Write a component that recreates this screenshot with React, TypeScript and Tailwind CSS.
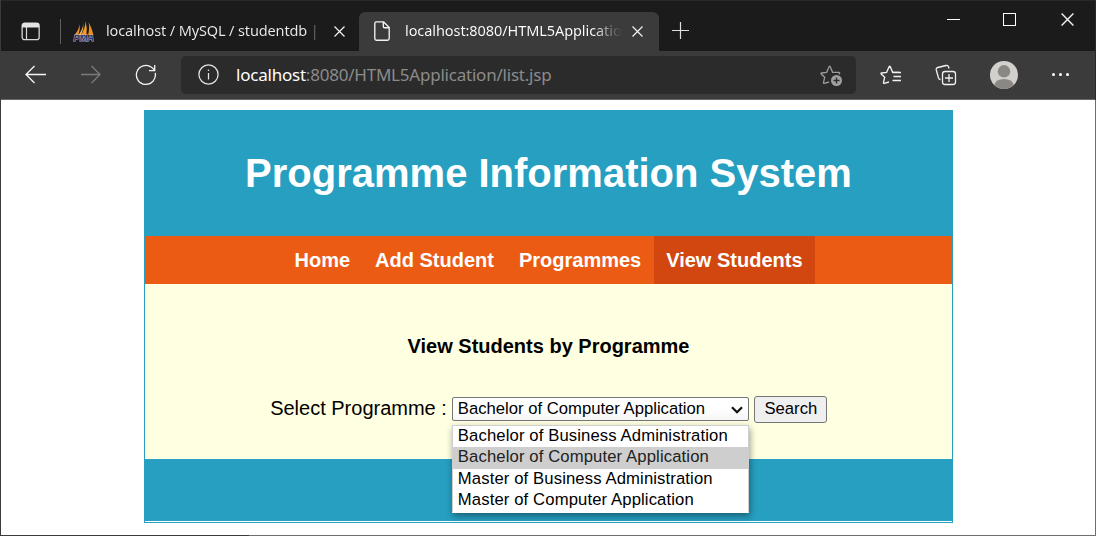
import React from 'react';

const navItems = ['Home', 'Add Student', 'Programmes', 'View Students'];
const options = [
  'Bachelor of Business Administration',
  'Bachelor of Computer Application',
  'Master of Business Administration',
  'Master of Computer Application',
];

function CloseIcon({ className }: { className: string }) {
  return (
    <svg className={className} viewBox="0 0 11 11" fill="none" stroke="#f2f2f2" strokeWidth="1.2">
      <path d="M.5 .5 10.5 10.5M10.5 .5 .5 10.5" />
    </svg>
  );
}

function TabStrip() {
  return (
    <div className="flex h-[51px] border-t border-[#292929] bg-[#1b1b1b]">
      <svg className="mt-[21px] ml-[20px] h-[19px] w-[19px] shrink-0" viewBox="0 0 19 19" fill="none">
        <rect x="1.15" y="1.15" width="17" height="16.5" rx="2.5" stroke="#d8d8d8" strokeWidth="1.3" />
        <path d="M1 3.5Q1 1 3.5 1H15.5Q18 1 18 3.5V5.5H1Z" fill="#e4e4e4" />
        <path d="M5.5 5V18" stroke="#d8d8d8" strokeWidth="1.2" />
      </svg>
      <div className="mt-[18px] ml-5 h-[25px] w-px shrink-0 bg-[#606060]" />
      <div className="flex h-[50px] w-[298px] shrink-0 rounded-br-[6px] pl-[12px]">
        <svg className="mt-[19px] h-[22px] w-[22px] shrink-0" viewBox="0 0 22 22">
          <path d="M6.5 4Q7.5 9 5.5 15H1.5Q6 10 6.5 4Z" fill="#e9952f" />
          <path d="M12.5 1Q14.5 8 13.5 15H8Q12.5 8 12.5 1Z" fill="#f59a22" />
          <path d="M15.5 2Q19 8 20.5 15H15Q17 8 15.5 2Z" fill="#f28c1e" />
          <path d="M10.5 3Q11 9 8 15H5.5Q10 9 10.5 3Z" fill="#f7b866" />
          <text x="0.5" y="20.8" textLength="20.5" lengthAdjust="spacingAndGlyphs" fill="#31335f" stroke="#b4b4cf" strokeWidth=".9" paintOrder="stroke" className="font-['Liberation_Sans',sans-serif] text-[8.5px] font-bold italic">PMA</text>
        </svg>
        <div className="mt-[17px] ml-[11px] h-6 w-[218px] bg-linear-to-r from-[#ececec] from-92% to-transparent to-98% bg-clip-text text-[14.5px] leading-6 tracking-[-0.13px] whitespace-nowrap text-transparent">
          localhost / MySQL / studentdb | p
        </div>
        <CloseIcon className="mt-[25px] ml-[10px] h-[11px] w-[11px] shrink-0" />
      </div>
      <div className="mt-[11px] flex h-[39px] w-[300px] shrink-0 rounded-t-[6px] bg-[#3b3b3b] pl-[15px]">
        <svg className="mt-[9px] h-[20px] w-[16px] shrink-0" viewBox="0 0 16 20" fill="none" stroke="#f3f3f3" strokeWidth="1.35" strokeLinejoin="round">
          <path d="M2.5 .8H9.5L15.2 6.5V17.5Q15.2 19.2 13.5 19.2H2.5Q.8 19.2 .8 17.5V2.5Q.8 .8 2.5 .8ZM9.3 1V5.5Q9.3 6.7 10.5 6.7H15" />
        </svg>
        <div className="mt-[6px] ml-[15px] h-6 w-[219px] bg-linear-to-r from-white from-86% to-[#3b3b3b] to-99% bg-clip-text text-[14.5px] leading-6 tracking-[-0.08px] whitespace-nowrap text-transparent">
          localhost:8080/HTML5Application
        </div>
        <CloseIcon className="mt-[14px] ml-[8px] h-[11px] w-[11px] shrink-0" />
      </div>
      <svg className="mt-[20px] ml-[12px] h-[19px] w-[19px] shrink-0" viewBox="0 0 19 19" stroke="#dddddd" strokeWidth="1.2">
        <path d="M1 9.5H18M9.5 1V18" />
      </svg>
      <div className="ml-auto flex pr-[21px]">
        <div className="mt-[18px] h-px w-[13px] bg-white" />
        <div className="mt-[12px] ml-[43px] h-[13px] w-[13px] border border-white" />
        <CloseIcon className="mt-[12px] ml-[45px] h-[13px] w-[13px]" />
      </div>
    </div>
  );
}

const starPath = 'M9 18 4.2 19.3Q3.3 19.5 3.5 18.6L4.7 13.2 1.2 10Q.6 9.2 1.6 9L6.6 8.3 9.2 2.5Q9.7 1.6 10.2 2.5L12.6 8.3H19';

function Toolbar() {
  return (
    <div className="flex h-[49px] items-start border-b border-[#686868] bg-[#3b3b3b] pl-[24px]">
      <svg className="mt-[14px] h-[19px] w-[21px] shrink-0" viewBox="0 0 21 19" fill="none" stroke="#f5f5f5" strokeWidth="1.3">
        <path d="M21 9.5H1M9.5 1 1 9.5 9.5 18" />
      </svg>
      <svg className="mt-[14px] ml-[34px] h-[19px] w-[21px] shrink-0" viewBox="0 0 21 19" fill="none" stroke="#7b7b7b" strokeWidth="1.3">
        <path d="M1 9.5H20M11.5 1 20 9.5 11.5 18" />
      </svg>
      <svg className="mt-[13px] ml-[34px] h-[22px] w-[22px] shrink-0" viewBox="0 0 22 22" fill="none" stroke="#f5f5f5" strokeWidth="1.3">
        <path d="M20.2 8.9A9.5 9.5 0 1 1 16.5 3.2Q18.5 4.5 19.4 6.4M19.7 1V6.7H14" />
      </svg>
      <div className="mt-[5px] ml-[24px] flex h-[38px] w-[675px] shrink-0 rounded-[5px] bg-[#2b2b2b] pl-[17px]">
        <svg className="mt-[8px] h-[21px] w-[21px] shrink-0" viewBox="0 0 21 21" fill="none" stroke="#e5e5e5" strokeWidth="1.25">
          <circle cx="10.5" cy="10.5" r="9.6" />
          <path d="M10.5 9V15.5" />
          <circle cx="10.5" cy="6.3" r=".8" fill="#e5e5e5" stroke="none" />
        </svg>
        <div className="mt-[5px] ml-[17px] w-[584px] text-[17px] leading-7 tracking-[-0.22px] whitespace-nowrap text-[#8b8b8b]">
          <span className="text-white">localhost</span>:8080/HTML5Application/list.jsp
        </div>
        <svg className="mt-[8px] h-[23px] w-[23px] shrink-0" viewBox="0 0 23 23" fill="none" stroke="#9a9a9a" strokeWidth="1.3">
          <path d={starPath + 'Q20.5 8.7 18.8 10.3'} />
          <circle cx="16.5" cy="16.5" r="5.5" fill="#a0a0a0" stroke="none" />
          <path d="M13.5 16.5H19.5M16.5 13.5V19.5" stroke="#2b2b2b" />
        </svg>
      </div>
      <svg className="mt-[13px] ml-[24px] h-[22px] w-[22px] shrink-0" viewBox="0 0 22 22" fill="none" stroke="#f1f1f1" strokeWidth="1.35">
        <path d={starPath} />
        <path d="M12.5 8.5H21M13.5 12.5H21M12.5 16.5H21" />
      </svg>
      <svg className="mt-[13px] ml-[33px] h-[22px] w-[22px] shrink-0" viewBox="0 0 22 22" fill="none" stroke="#f1f1f1" strokeWidth="1.3">
        <rect x="7.5" y="7.5" width="13" height="13" rx="2.5" />
        <path d="M14 10V18M10 14H18M14 4.5 13.5 2.8Q13 1 11.1 1.5L2.8 3.5Q.8 4 1.3 6L3.5 14Q4 15.5 5.5 15.5" />
      </svg>
      <svg className="mt-[10px] ml-[33px] h-[28px] w-[28px] shrink-0" viewBox="0 0 28 28">
        <circle cx="14" cy="14" r="14" fill="#d2d0cd" />
        <circle cx="14" cy="10.3" r="6.2" fill="#8b8785" />
        <path d="M4.3 24Q5.7 18 14 18T23.7 24A14 14 0 0 1 4.3 24Z" fill="#8b8785" />
      </svg>
      <div className="mt-[22px] ml-[34px] flex gap-[4px]">
        <div className="h-[3px] w-[3px] rounded-full bg-white" />
        <div className="h-[3px] w-[3px] rounded-full bg-white" />
        <div className="h-[3px] w-[3px] rounded-full bg-white" />
      </div>
    </div>
  );
}

function ProgrammeSelect() {
  return (
    <div className="relative mt-[1px] ml-[5px] h-6 w-[297px] rounded-[2px] border border-[#767676] bg-linear-to-b from-white from-50% to-[#f6f6f6]">
      <div className="flex h-full items-center justify-between pr-[5px] pl-[5px] text-[16.67px] leading-[22px] whitespace-nowrap">
        <span>{options[1]}</span>
        <svg className="mt-px h-[8px] w-[12px]" viewBox="0 0 12 8" fill="none" stroke="#111" strokeWidth="2.2">
          <path d="M1 1.2 6 6.2 11 1.2" />
        </svg>
      </div>
      <div className="absolute top-[27px] -left-px h-[88px] w-[297px] border border-[#cfcfcf] border-b-white bg-white shadow-[1px_3px_7px_rgba(0,0,0,0.4)]">
        {options.map((option, index) => (
          <div
            key={option}
            className={`pl-[5px] text-[16.67px] leading-[20px] tracking-[0.12px] whitespace-nowrap ${index === 1 ? 'h-[22px] bg-[#cecece] text-[#222]' : 'h-[21px] text-black'}`}
          >
            {option}
          </div>
        ))}
      </div>
    </div>
  );
}

function ProgrammePage() {
  return (
    <div className="mt-[10px] ml-[143px] h-[413px] w-[809px] border border-[#269fc1] bg-white font-['Liberation_Sans',Arial,sans-serif] text-xl text-black">
      <header className="h-[125px] bg-[#269fc1] pt-[39px] text-center text-[40px] leading-[46px] font-bold text-white">
        <h1>Programme Information System</h1>
      </header>
      <nav className="flex h-12 justify-center bg-[#eb5b13] font-bold text-white">
        {navItems.map((item) => (
          <a key={item} className={`px-[12.5px] leading-[48px] ${item === 'View Students' ? 'bg-[#d24610]' : ''}`}>
            {item}
          </a>
        ))}
      </nav>
      <main className="h-[175px] bg-[#ffffe2] pt-[50px]">
        <h2 className="text-center leading-6 font-bold">View Students by Programme</h2>
        <div className="mt-[38px] flex justify-center">
          <label className="leading-6">Select Programme :</label>
          <ProgrammeSelect />
          <button className="ml-[5px] h-[27px] w-[73px] rounded-[3px] border border-[#767676] bg-[#efefef] pb-[2px] pl-px text-[16.67px] leading-[23px]">Search</button>
        </div>
      </main>
      <footer className="h-[62px] bg-[#269fc1]" />
    </div>
  );
}

export default function App() {
  return (
    <div className="flex h-[536px] w-[1096px] overflow-hidden bg-white font-['Noto_Sans','Open_Sans',sans-serif]">
      <div className="w-px shrink-0 bg-[#3b3b3b]" />
      <div className="flex w-[1094px] shrink-0 flex-col">
        <TabStrip />
        <Toolbar />
        <ProgrammePage />
        <div className="mt-auto flex h-px">
          <div className="w-[248px] bg-[#3b3b3b]" />
          <div className="flex-1 bg-[#6e6e6e]" />
        </div>
      </div>
      <div className="flex w-px shrink-0 flex-col">
        <div className="h-[100px] bg-[#292929]" />
        <div className="flex-1 bg-[#6e6e6e]" />
      </div>
    </div>
  );
}
